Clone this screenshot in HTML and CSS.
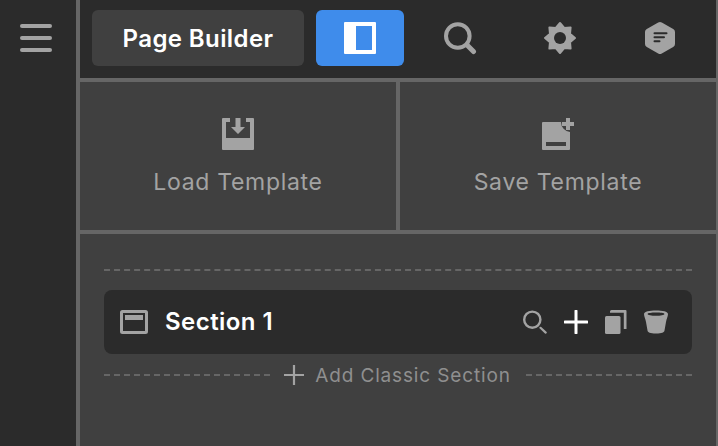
FILE: index.html
```html
<!DOCTYPE html>
<html lang="en">
<head>
<meta charset="utf-8">
<title>Page Builder</title>
<link rel="stylesheet" href="styles.css">
</head>
<body>
<div class="app">
  <aside class="rail">
    <button class="menu" aria-label="Menu"><span></span><span></span><span></span></button>
  </aside>
  <main class="panel">
    <header class="topbar">
      <div class="title">Page Builder</div>
      <div class="toggle">
        <svg width="32" height="32" viewBox="0 0 32 32"><path fill="#fff" fill-rule="evenodd" d="M1 0h30a1 1 0 0 1 1 1v30a1 1 0 0 1-1 1H1a1 1 0 0 1-1-1V1a1 1 0 0 1 1-1zM12 4v24h16V4z"/></svg>
      </div>
      <div class="tool">
        <svg width="34" height="34" viewBox="0 0 34 34"><circle cx="14.800" cy="15" r="11.800" fill="none" stroke="#a3a3a3" stroke-width="4"/><path d="M24 24l6.500 6.500" stroke="#a3a3a3" stroke-width="5" stroke-linecap="round"/></svg>
      </div>
      <div class="tool">
        <svg width="34" height="34" viewBox="0 0 34 34"><path fill="#a3a3a3" stroke="#a3a3a3" stroke-width="2" stroke-linejoin="round" d="M17 2L21.200 7 27.600 6.400 27 12.800 32 17 27 21.200 27.600 27.600 21.200 27 17 32 12.800 27 6.400 27.600 7 21.200 2 17 7 12.800 6.400 6.400 12.800 7z"/><circle cx="17" cy="17" r="6" fill="#2b2b2b"/></svg>
      </div>
      <div class="tool">
        <svg width="34" height="34" viewBox="0 0 34 34"><path fill="#a3a3a3" d="M15.200 1.500a3.600 3.600 0 0 1 3.600 0l11.400 6.400A3.500 3.500 0 0 1 32 11v12a3.500 3.500 0 0 1-1.800 3.100l-11.400 6.400a3.600 3.600 0 0 1-3.600 0L3.800 26.100A3.500 3.500 0 0 1 2 23V11a3.500 3.500 0 0 1 1.800-3.100z"/><path d="M11.500 12.300h12M11.500 16.300h9.500M11.500 20.300h5" stroke="#2b2b2b" stroke-width="2" stroke-linecap="round"/></svg>
      </div>
    </header>
    <section class="tiles">
      <div class="tile">
        <svg width="32" height="32" viewBox="0 0 32 32"><path fill="#a3a3a3" d="M1 0h7v4H4v16h24V4h-4V0h7a1 1 0 0 1 1 1v30a1 1 0 0 1-1 1H1a1 1 0 0 1-1-1V1a1 1 0 0 1 1-1z"/><path fill="#a3a3a3" d="M13.500 0h5v9H23l-7 7-7-7h4.500z"/></svg>
        <span>Load Template</span>
      </div>
      <div class="tile">
        <svg width="32" height="32" viewBox="0 0 32 32"><path fill="#a3a3a3" fill-rule="evenodd" d="M1 4h18a10 10 0 0 0 9 10v17a1 1 0 0 1-1 1H1a1 1 0 0 1-1-1V5a1 1 0 0 1 1-1zM4 24v4h20v-4z"/><path fill="#a3a3a3" d="M24 0h4v4h4v4h-4v4h-4V8h-4V4h4z"/></svg>
        <span>Save Template</span>
      </div>
    </section>
    <section class="canvas">
      <div class="dashes top"></div>
      <div class="row">
        <svg class="row-icon" width="28" height="24" viewBox="0 0 28 24"><rect x="1.500" y="1.500" width="25" height="21" rx="1" fill="none" stroke="#a3a3a3" stroke-width="3"/><rect x="5" y="5" width="18" height="5" fill="#a3a3a3"/></svg>
        <div class="row-title">Section 1</div>
        <div class="row-actions">
          <svg width="25" height="24" viewBox="0 0 25 24"><circle cx="10.300" cy="9.700" r="8.100" fill="none" stroke="#a3a3a3" stroke-width="2.400"/><path d="M18.500 17.800l5.200 4.800" stroke="#a3a3a3" stroke-width="2.200" stroke-linecap="round"/></svg>
          <svg width="24" height="24" viewBox="0 0 24 24"><path d="M12 1v22M1 12h22" stroke="#fff" stroke-width="3" stroke-linecap="round"/></svg>
          <svg width="22" height="24" viewBox="0 0 22 24"><rect x="0" y="6" width="15.500" height="18" rx="1.500" fill="#a3a3a3"/><path d="M5 1.500A1.500 1.500 0 0 1 6.500 0H20.500a1 1 0 0 1 1 1v18H18.800V2.700H5z" fill="#a3a3a3"/></svg>
          <svg width="24" height="24" viewBox="0 0 24 24"><path fill="#a3a3a3" fill-rule="evenodd" d="M12 .5c6.500 0 12 1.100 12 3.500 0 2.500-1.500 4.500-2 8l-1.500 8.500c-.3 2-2.500 3-8.500 3s-8.200-1-8.500-3L2 12C1.500 8.500 0 6.500 0 4c0-2.400 5.500-3.500 12-3.500zm0 2C7.500 2.500 3.500 3 3.500 4S7.500 5.800 12 5.800 20.500 5 20.500 4 16.500 2.500 12 2.500z"/></svg>
        </div>
      </div>
      <div class="add">
        <div class="dashes"></div>
        <svg width="20" height="20" viewBox="0 0 20 20"><path d="M10 0v20M0 10h20" stroke="#a3a3a3" stroke-width="2.200" stroke-linecap="round"/></svg>
        <span>Add Classic Section</span>
        <div class="dashes"></div>
      </div>
    </section>
  </main>
</div>
</body>
</html>
```
FILE: styles.css
```css
* { box-sizing: border-box; }
html, body { margin: 0; height: 100%; overflow: hidden; background: #404040; }
body { font-family: Inter, "Liberation Sans", sans-serif; }
.app { display: flex; width: 718px; height: 446px; }
.rail { width: 80px; flex: none; background: #2b2b2b; border-right: 4px solid #666; padding: 24px 0 0 20px; }
.menu { display: flex; flex-direction: column; gap: 8px; width: 32px; padding: 0; background: none; border: 0; }
.menu span { display: block; height: 4px; width: 32px; border-radius: 2px; background: #a3a3a3; }
.panel { flex: 1; display: flex; flex-direction: column; min-width: 0; border-right: 2px solid #666; }
.topbar { height: 82px; flex: none; display: flex; align-items: flex-start; padding: 10px 0 0 12px; background: #2b2b2b; border-bottom: 4px solid #666; }
.title { width: 212px; height: 56px; flex: none; display: flex; align-items: center; justify-content: center; border-radius: 6px; background: #404040; color: #fff; font-size: 24px; font-weight: 600; letter-spacing: .4px; }
.toggle { width: 88px; height: 56px; flex: none; margin-left: 12px; display: flex; align-items: center; justify-content: center; border-radius: 6px; background: #3f8ceb; }
.tool { width: 100px; height: 56px; flex: none; display: flex; align-items: center; justify-content: center; }
.toggle + .tool { margin-left: 6px; }
.tiles { height: 152px; flex: none; display: flex; border-bottom: 4px solid #666; }
.tile { flex: 1; display: flex; flex-direction: column; align-items: center; padding-top: 36px; gap: 18px; color: #a3a3a3; font-size: 23px; letter-spacing: .7px; }
.tile + .tile { border-left: 4px solid #666; }
.canvas { flex: 1; padding: 35px 24px 0; }
.dashes { height: 0; flex: 1; border-top: 2px dashed #666; }
.top { flex: none; }
.row { height: 64px; margin-top: 19px; display: flex; align-items: center; padding: 0 24px 0 16px; border-radius: 8px; background: #2b2b2b; }
.row-title { margin: 0 0 2px 17px; color: #fff; font-size: 24px; font-weight: 600; letter-spacing: .45px; }
.row-actions { margin-left: auto; display: flex; align-items: center; gap: 17px; }
.add { display: flex; align-items: center; height: 42px; color: #8f8f8f; font-size: 19px; letter-spacing: .85px; }
.add svg { margin: 0 11px 0 14px; }
.add span { margin-right: 15px; }
```
